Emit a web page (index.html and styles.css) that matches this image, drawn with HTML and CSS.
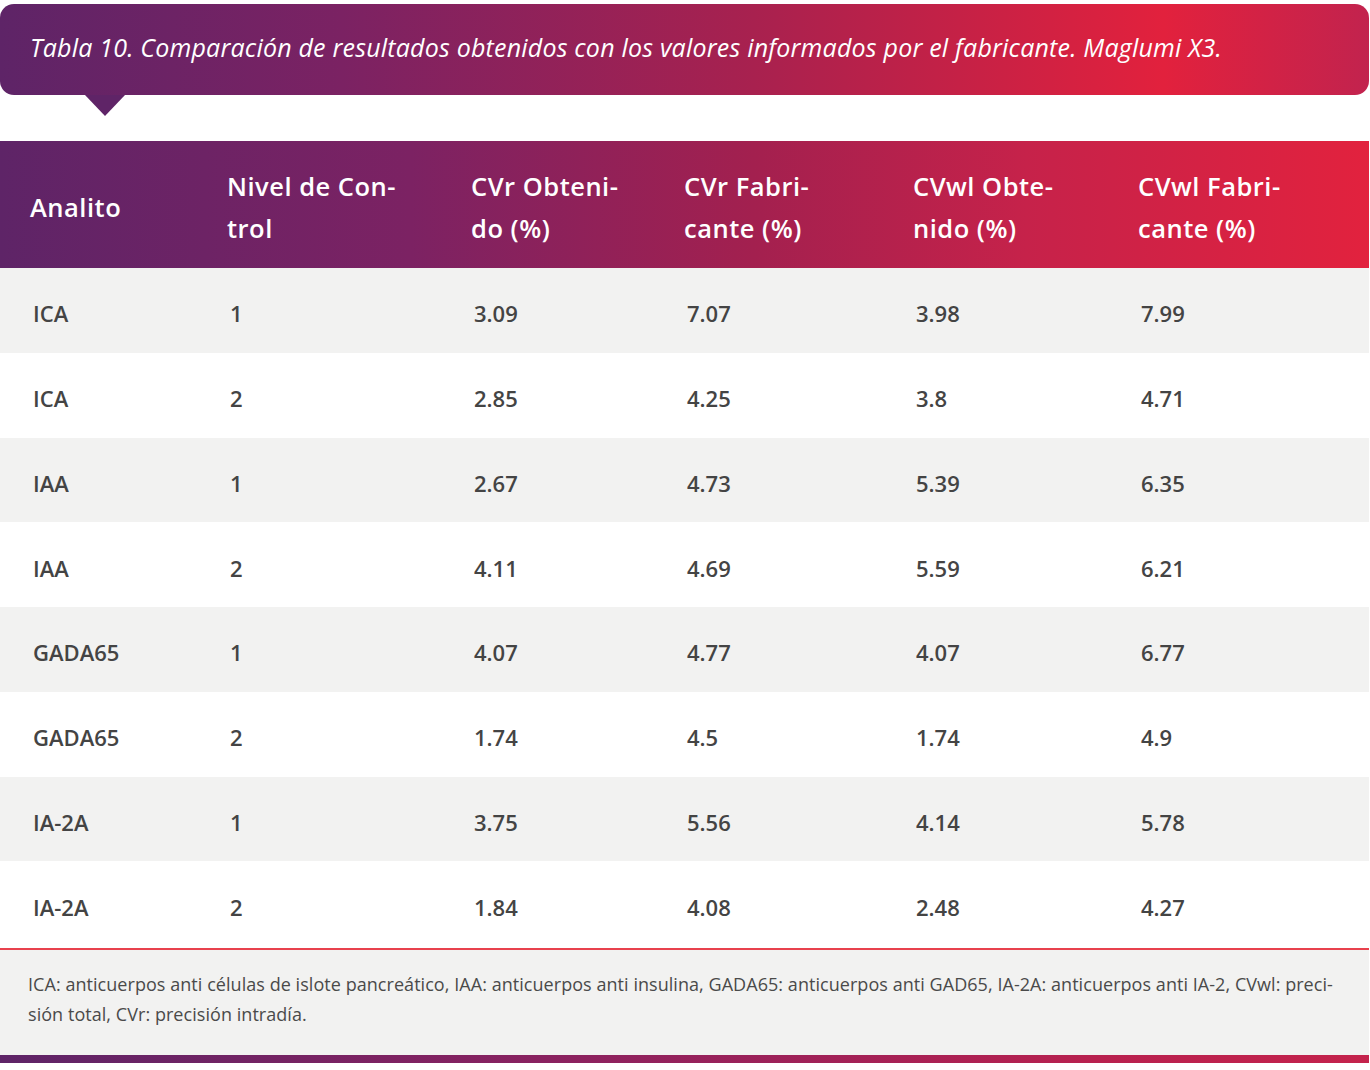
FILE: index.html
```html
<!DOCTYPE html>
<html lang="es">
<head>
<meta charset="utf-8">
<title>Tabla 10</title>
<link rel="stylesheet" href="styles.css">
</head>
<body>
<div class="page">
  <div class="caption">
    <p class="caption-text">Tabla 10. Comparación de resultados obtenidos con los valores informados por el fabricante. Maglumi X3.</p>
  </div>
  <table class="data">
    <colgroup>
      <col class="c1"><col class="c2"><col class="c3"><col class="c4"><col class="c5"><col class="c6">
    </colgroup>
    <thead>
      <tr>
        <th>Analito</th>
        <th>Nivel de Con-<br>trol</th>
        <th>CVr Obteni-<br>do (%)</th>
        <th>CVr Fabri-<br>cante (%)</th>
        <th>CVwl Obte-<br>nido (%)</th>
        <th>CVwl Fabri-<br>cante (%)</th>
      </tr>
    </thead>
    <tbody>
      <tr><td>ICA</td><td>1</td><td>3.09</td><td>7.07</td><td>3.98</td><td>7.99</td></tr>
      <tr><td>ICA</td><td>2</td><td>2.85</td><td>4.25</td><td>3.8</td><td>4.71</td></tr>
      <tr><td>IAA</td><td>1</td><td>2.67</td><td>4.73</td><td>5.39</td><td>6.35</td></tr>
      <tr><td>IAA</td><td>2</td><td>4.11</td><td>4.69</td><td>5.59</td><td>6.21</td></tr>
      <tr><td>GADA65</td><td>1</td><td>4.07</td><td>4.77</td><td>4.07</td><td>6.77</td></tr>
      <tr><td>GADA65</td><td>2</td><td>1.74</td><td>4.5</td><td>1.74</td><td>4.9</td></tr>
      <tr><td>IA-2A</td><td>1</td><td>3.75</td><td>5.56</td><td>4.14</td><td>5.78</td></tr>
      <tr><td>IA-2A</td><td>2</td><td>1.84</td><td>4.08</td><td>2.48</td><td>4.27</td></tr>
    </tbody>
  </table>
  <div class="footnote">
    <p>ICA: anticuerpos anti células de islote pancreático, IAA: anticuerpos anti insulina, GADA65: anticuerpos anti GAD65, IA-2A: anticuerpos anti IA-2, CVwl: preci-<br>sión total, CVr: precisión intradía.</p>
  </div>
  <div class="bottom-bar"></div>
</div>
</body>
</html>
```

FILE: styles.css
```css
* { box-sizing: border-box; }
html, body { margin: 0; padding: 0; background: #ffffff; }
body { font-family: "Open Sans", "DejaVu Sans", sans-serif; }
.page { width: 1369px; padding-top: 4px; }

.caption {
  position: relative;
  height: 91px;
  border-radius: 14px;
  background: linear-gradient(90deg, #5e2467 0%, #7b2263 25%, #a8214f 55%, #e2213d 85%, #c2234e 100%);
  display: flex;
  align-items: center;
  padding-left: 30px;
  margin-bottom: 46px;
}
.caption::after {
  content: "";
  position: absolute;
  left: 85px;
  top: 91px;
  width: 0; height: 0;
  border-left: 20px solid transparent;
  border-right: 20px solid transparent;
  border-top: 21px solid #5f2467;
}
.caption-text {
  margin: 0 0 6px 0;
  color: #ffffff;
  font-style: italic;
  font-size: 25px;
  letter-spacing: 0.2px;
  white-space: nowrap;
}

.data {
  width: 1369px;
  border-collapse: collapse;
  table-layout: fixed;
}
.c1 { width: 197px; }
.c2 { width: 244px; }
.c3 { width: 213px; }
.c4 { width: 229px; }
.c5 { width: 225px; }
.c6 { width: 261px; }

.data thead tr {
  background: linear-gradient(90deg, #5e2467 0%, #7c2263 30%, #a3204f 55%, #c6224a 75%, #e2223e 100%);
}
.data th {
  height: 127px;
  text-align: left;
  vertical-align: middle;
  padding: 5px 0 0 30px;
  color: #ffffff;
  font-weight: 600;
  font-size: 25.5px;
  letter-spacing: 0.5px;
  line-height: 42px;
  white-space: nowrap;
}
.data td {
  height: 84.75px;
  padding: 6px 0 0 33px;
  color: #444444;
  font-weight: 600;
  font-size: 22px;
  vertical-align: middle;
}
.data tbody tr:nth-child(odd) { background: #f2f2f1; }
.data tbody tr:nth-child(even) { background: #ffffff; }

.footnote {
  margin-top: 2px;
  border-top: 2px solid #e8414d;
  background: #f2f2f1;
  height: 107px;
  padding: 19px 0 0 28px;
}
.footnote p {
  margin: 0;
  color: #4a4a4a;
  font-size: 18px;
  line-height: 30px;
  font-weight: 500;
  letter-spacing: 0.05px;
  white-space: nowrap;
}
.bottom-bar {
  height: 8px;
  background: linear-gradient(90deg, #5e2467 0%, #8a2260 40%, #b8214f 80%, #c4234c 100%);
}
```
